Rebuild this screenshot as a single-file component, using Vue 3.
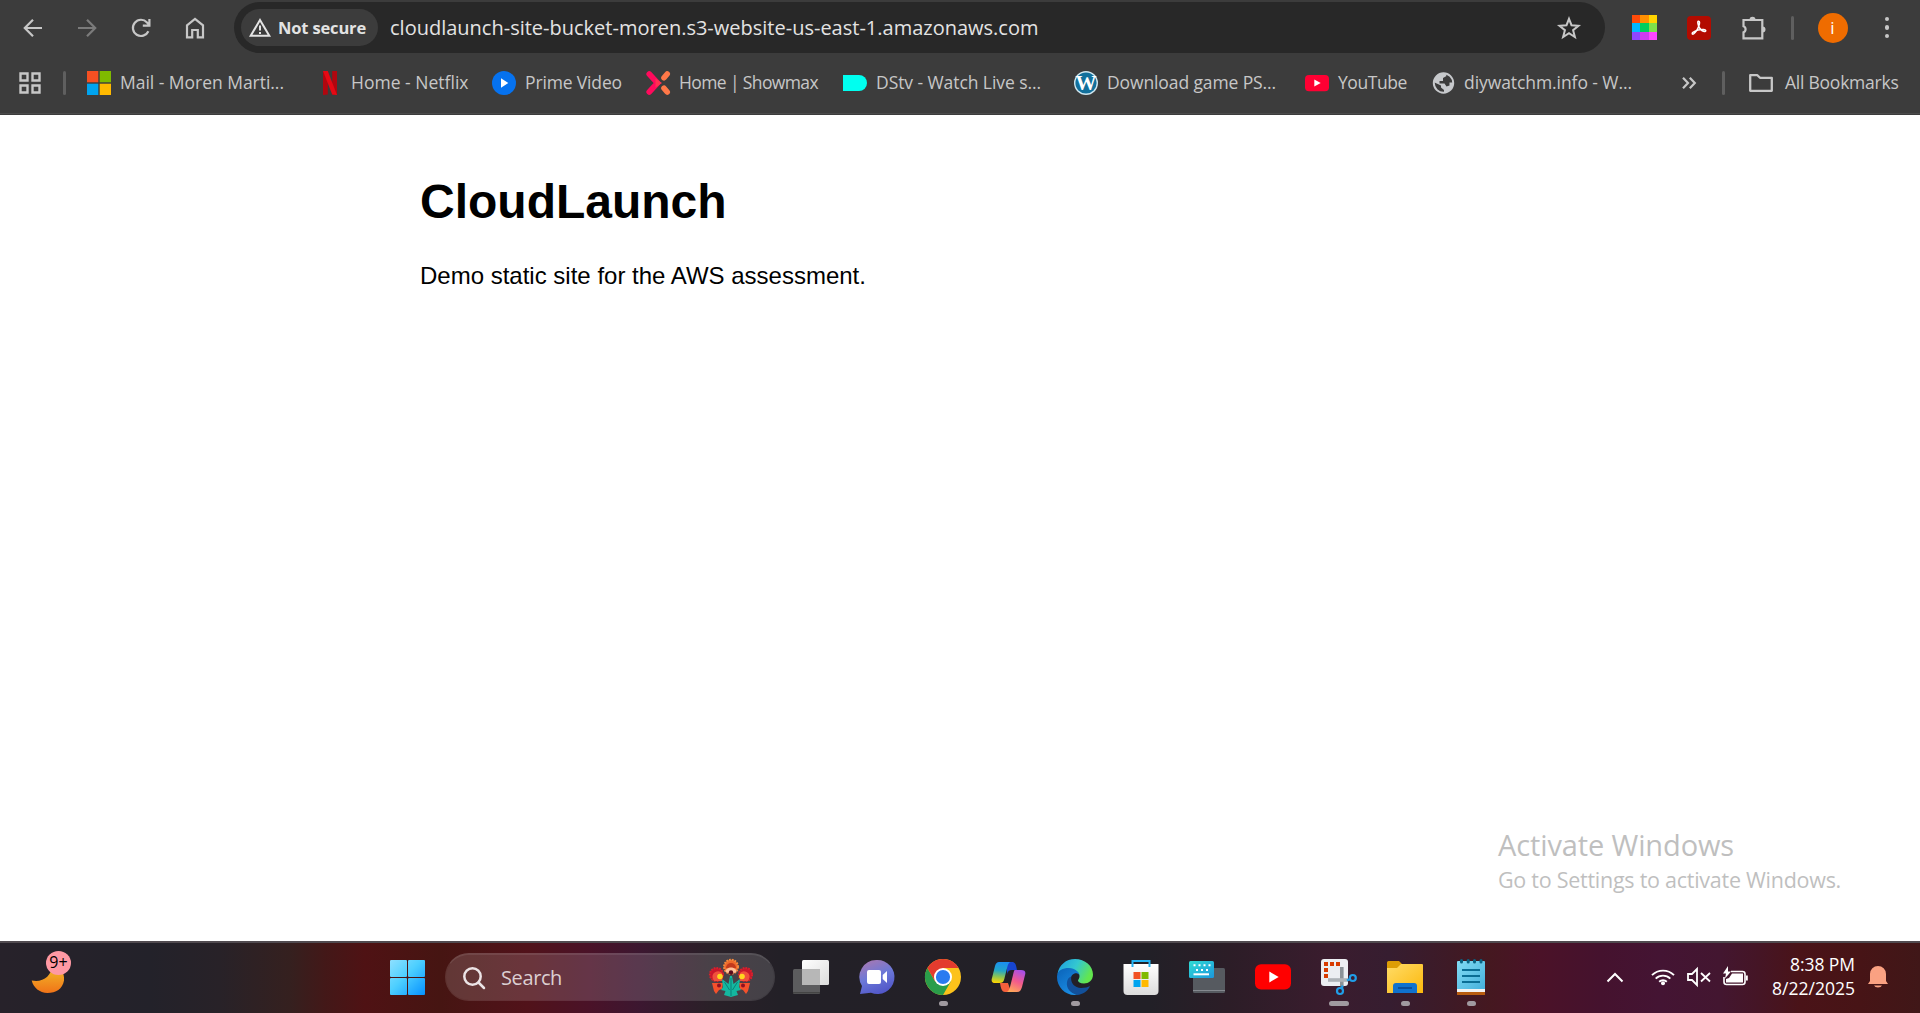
<script setup>
const bookmarks = [
  { id: 'mail', label: 'Mail - Moren Marti...', slot: 231, width: 164 },
  { id: 'netflix', label: 'Home - Netflix', slot: 174, width: 117.5 },
  { id: 'prime', label: 'Prime Video', slot: 154, width: 97 },
  { id: 'showmax', label: 'Home | Showmax', slot: 197, width: 139 },
  { id: 'dstv', label: 'DStv - Watch Live s...', slot: 231, width: 165 },
  { id: 'wordpress', label: 'Download game PS...', slot: 231, width: 169 },
  { id: 'youtube', label: 'YouTube', slot: 126, width: 69 },
  { id: 'globe', label: 'diywatchm.info - W...', slot: 248, width: 168 },
]

const apps = [
  { id: 'taskview' },
  { id: 'chat' },
  { id: 'chrome', run: 9 },
  { id: 'copilot' },
  { id: 'edge', run: 9 },
  { id: 'store' },
  { id: 'keyboard' },
  { id: 'youtube' },
  { id: 'snip', run: 20 },
  { id: 'explorer', run: 9 },
  { id: 'notepad', run: 9 },
]

const swatches = ['#ff4b0a', '#ff8f00', '#ffd400', '#00b8ff', '#00cf5d', '#7ee04a', '#8f45ff', '#cf3df0', '#ff45ff']

// Adjusts tracking so that a label takes up the given width in pixels.
const vFit = {
  mounted(el, { value }) {
    const natural = el.getBoundingClientRect().width
    const count = el.textContent.length
    el.style.letterSpacing = ((value - natural) / count).toFixed(3) + 'px'
  },
}
</script>

<template>
  <div class="screen">
    <header class="browser">
      <div class="toolbar">
        <nav class="nav">
          <svg class="nav-icon" viewBox="0 0 24 24"><path d="M21 12H4M12 3.8 3.8 12l8.2 8.2" /></svg>
          <svg class="nav-icon dim" viewBox="0 0 24 24"><path d="M3 12h17M12 3.8l8.2 8.2-8.2 8.2" /></svg>
          <svg class="nav-icon" viewBox="0 0 24 24"><path d="M19.4 15.2A8.1 8.1 0 1 1 18 6.4l2 2.2M20.4 3v6.6h-6.6" /></svg>
          <svg class="nav-icon" viewBox="0 0 24 24"><path d="M4 9.3 12 3l8 6.3V21.300h-5.200v-7.300H9.200v7.300H4z" /></svg>
        </nav>
        <div class="omnibox">
          <div class="chip">
            <svg class="warn" viewBox="0 0 22 19"><path d="M11 2 20.300 17.800H1.700z" /><path d="M11 7.500v5M11 14v2" /></svg>
            <b v-fit="88">Not secure</b>
          </div>
          <span v-fit="648.5" class="url">cloudlaunch-site-bucket-moren.s3-website-us-east-1.amazonaws.com</span>
          <svg class="star" viewBox="0 0 24 24"><path d="M12 2.800l2.500 6.400 7 .5-5.400 4.500 1.800 6.800-5.900-3.800-5.900 3.800 1.800-6.800-5.400-4.500 7-.5z" /></svg>
        </div>
        <div class="swatches"><i v-for="c in swatches" :key="c" :style="{ background: c }"></i></div>
        <svg class="acrobat" viewBox="0 0 24 24">
          <rect width="24" height="24" rx="4" fill="#b30b00" />
          <path d="M11.300 5.300c1.600-.4 1.500 2 .5 4.800-1.200 3.400-3.300 6.600-5.200 7.800-1.700 1-2-1 0-2 3-1.700 7.300-2.600 10.300-2.300 2.800.3 2.200 2.300.3 1.900-2.800-.6-5-3.400-5.900-6.500-.5-1.600-.7-3.400 0-3.700z" fill="none" stroke="#fff" stroke-width="1.500" />
        </svg>
        <svg class="puzzle" viewBox="0 0 26 26"><path d="M2.500 5h18.800v18.400H2.500v-6.200a3.200 3.200 0 0 0 0-6z" /><path class="fill" d="M8.500 4.800a3 3 0 0 1 6 0zM21.500 11.500a3 3 0 0 1 0 6z" /></svg>
        <i class="rule"></i>
        <div class="avatar">i</div>
        <div class="dots"><i></i><i></i><i></i></div>
      </div>

      <div class="bookmarks">
        <svg class="grid-icon" viewBox="0 0 22 22"><path d="M1.500 1.500h7v7h-7zM13.500 1.500h7v7h-7zM1.500 13.500h7v7h-7zM13.500 13.500h7v7h-7z" /></svg>
        <i class="rule"></i>
        <div class="links">
          <a v-for="b in bookmarks" :key="b.id" class="link" :style="{ width: b.slot + 'px' }">
            <svg class="fav" viewBox="0 0 24 24">
              <template v-if="b.id === 'mail'">
                <path fill="#f65022" d="M0 0h11.300v11.300H0z" /><path fill="#7fba00" d="M12.700 0H24v11.300H12.700z" />
                <path fill="#00a4ef" d="M0 12.700h11.300V24H0z" /><path fill="#ffb900" d="M12.700 12.700H24V24H12.700z" />
              </template>
              <template v-else-if="b.id === 'netflix'">
                <path fill="#b1060f" d="M5 0h4.800v23.500L5 24zM14.200 0H19v24l-4.800-.5z" />
                <path fill="#e50914" d="M5 0h4.800L19 24l-4.800-.5z" />
              </template>
              <template v-else-if="b.id === 'prime'">
                <circle cx="12" cy="12" r="12" fill="#0672ef" /><path fill="#fff" d="M9 7.300v9.400l7.300-4.700z" />
              </template>
              <template v-else-if="b.id === 'showmax'">
                <g fill="none" stroke-width="5.600" stroke-linecap="round" stroke-linejoin="round"><path stroke="#ff7848" d="M21.200 3 18 6.800M18 17.200l3.200 3.800" /><path stroke="#ff0a5c" d="M3.200 3 11.500 12 3.200 21" /></g>
                <path fill="#ff3050" d="M9.500 7.500l6.500 4.500-6.500 4.500z" />
              </template>
              <path v-else-if="b.id === 'dstv'" fill="#00fff0" d="M0 4h16a8 8 0 0 1 0 16H0z" />
              <template v-else-if="b.id === 'wordpress'">
                <circle cx="12" cy="12" r="12" fill="#cfe6ef" /><circle cx="12" cy="12" r="10.600" fill="#12709c" />
                <text x="12" y="19" text-anchor="middle" textLength="21" lengthAdjust="spacingAndGlyphs" class="wp">W</text>
              </template>
              <template v-else-if="b.id === 'youtube'">
                <rect y="4" width="24" height="16.300" rx="4" fill="#ff0033" /><path fill="#fff" d="M9.300 8.500v7L15.700 12z" />
              </template>
              <template v-else>
                <circle cx="12.500" cy="12" r="9.700" fill="none" stroke="#c7c9cc" stroke-width="2" />
                <path fill="#c7c9cc" d="M2.500 11C4 5 9 1.500 14.500 2.500l1 2.500-3.500 2v3H8.500v2.500h5l2 3 3-1v-3h4c0 6-5 10-9.500 10v-2.500l-3-2.500v-2z" />
              </template>
            </svg>
            <span v-fit="b.width">{{ b.label }}</span>
          </a>
        </div>
        <svg class="more" viewBox="0 0 14 12"><path d="M1 .8 6 6l-5 5.200M7.800.8l5 5.200-5 5.200" /></svg>
        <i class="rule second"></i>
        <svg class="folder" viewBox="0 0 24 18"><path d="M1.200 15.800V1.200h7.200l2.600 2.600h11.800v13H1.200z" /></svg>
        <span v-fit="113.5" class="all">All Bookmarks</span>
      </div>
    </header>

    <main class="page">
      <article>
        <h1>CloudLaunch</h1>
        <p>Demo static site for the AWS assessment.</p>
      </article>
      <aside class="watermark">
        <div><span v-fit="236" class="wm-title">Activate Windows</span></div>
        <div><span v-fit="343" class="wm-text">Go to Settings to activate Windows.</span></div>
      </aside>
    </main>

    <footer class="taskbar">
      <div class="weather">
        <svg class="moon" viewBox="0 0 34 32">
          <defs><linearGradient id="mn" x1="0" y1="0" x2="0" y2="1"><stop stop-color="#f2c32c" /><stop offset="1" stop-color="#f07318" /></linearGradient></defs>
          <path fill="url(#mn)" d="M.7 19.500C12 21.500 20 16 22 3c7 3 12 9 11 16.500C31.500 28 25 32 16.500 32 8.500 31.500 2.500 27 .7 19.500z" />
        </svg>
        <span class="badge">9+</span>
      </div>
      <svg class="start" viewBox="0 0 35 35">
        <defs><linearGradient id="st" gradientUnits="userSpaceOnUse" x1="0" y1="0" x2="35" y2="35"><stop stop-color="#8ee0ff" /><stop offset=".45" stop-color="#4dcfff" /><stop offset="1" stop-color="#0691ff" /></linearGradient></defs>
        <g fill="url(#st)"><rect width="17" height="17" rx="1" /><rect x="18" width="17" height="17" rx="1" /><rect y="18" width="17" height="17" rx="1" /><rect x="18" y="18" width="17" height="17" rx="1" /></g>
      </svg>
      <div class="search">
        <svg class="lens" viewBox="0 0 22 22"><circle cx="9.500" cy="9.500" r="8.200" /><path d="M15.500 15.500 21 21" /></svg>
        <span v-fit="61">Search</span>
        <svg class="flower" viewBox="0 0 44 38">
          <path fill="#f4512c" d="M3 24h11l-1 6-3 1-3 4-2-3zM41 24H30l1 6 3 1 3 4 2-3z" />
          <circle cx="7.500" cy="15.500" r="6.600" fill="#c9162b" /><circle cx="7.500" cy="15.500" r="6.600" fill="none" stroke="#d8202c" stroke-width="2" stroke-dasharray="1.800 1" />
          <circle cx="36.500" cy="15.500" r="6.600" fill="#c9162b" /><circle cx="36.500" cy="15.500" r="6.600" fill="none" stroke="#d8202c" stroke-width="2" stroke-dasharray="1.800 1" />
          <path fill="#f0503c" d="M4 20a5.500 5.500 0 0 1 9-6v8H5zM40 20a5.500 5.500 0 0 0-9-6v8h8z" />
          <circle cx="22" cy="7.800" r="7" fill="#ee6a2c" /><circle cx="22" cy="7.800" r="7" fill="none" stroke="#f58a3c" stroke-width="2" stroke-dasharray="1.800 1" />
          <path fill="#c23a1c" d="M17 9a5 5 0 0 1 10 0z" /><path fill="#ffc19a" d="M16.500 13c0-6 11-6 11 0l-5.500 2z" />
          <circle cx="22" cy="13.500" r="2.200" fill="#5a0c1c" />
          <path fill="#14b8a0" d="M22 38l-7-2 1.500-4-4.500-1 2-3-1-8 6.500 5L21 17h2l1.500 8 6.500-5-1 8 2 3-4.500 1L29 36z" />
          <path stroke="#0b7f78" d="M22 19v18M15.500 23l5 8M28.500 23l-5 8" fill="none" />
          <circle cx="11" cy="17.500" r="2.800" fill="#ffd51f" /><circle cx="33" cy="17.500" r="2.800" fill="#ffd51f" />
          <circle cx="10" cy="26.500" r="2" fill="#8f1022" /><circle cx="34" cy="26.500" r="2" fill="#8f1022" />
        </svg>
      </div>

      <div class="apps">
        <div v-for="a in apps" :key="a.id" class="app">
          <svg class="app-icon" viewBox="0 0 36 36">
            <template v-if="a.id === 'taskview'">
              <defs><linearGradient id="tv" x1="0" y1="0" x2="1" y2="1"><stop stop-color="#fff" /><stop offset="1" stop-color="#dcdcdc" /></linearGradient></defs>
              <rect y="10" width="27" height="25" rx="1.500" fill="#5c5c5e" /><rect y="33" width="27" height="1.500" fill="#444" />
              <rect x="9" y="1" width="27" height="25" rx="1.500" fill="url(#tv)" /><path fill="#b7b7b7" d="M9 10h18v16H9z" />
            </template>
            <template v-else-if="a.id === 'chat'">
              <defs><linearGradient id="ch" x1=".2" y1="0" x2=".6" y2="1"><stop stop-color="#a778b2" /><stop offset=".5" stop-color="#6b78d8" /><stop offset="1" stop-color="#5156c8" /></linearGradient></defs>
              <path fill="url(#ch)" d="M18 1a17 17 0 1 1-6 32.700L1 35l2-8A17 17 0 0 1 18 1z" />
              <rect x="8" y="11" width="14" height="14" rx="2" fill="#fff" /><path fill="#fff" d="M23.700 16 28 12v12l-4.300-4z" />
            </template>
            <template v-else-if="a.id === 'chrome'">
              <circle cx="18" cy="18" r="18" fill="#fcc21b" />
              <path fill="#e33b2e" d="M2.400 9A18 18 0 0 1 33.600 9H18v9z" />
              <path fill="#2a9d4a" d="M2.400 9A18 18 0 0 0 18 36l7.800-13.500L10.200 22.500z" />
              <path fill="#e33b2e" d="M2.400 9 10.200 22.500 18 9z" />
              <circle cx="18" cy="18" r="9" fill="#fff" /><circle cx="18" cy="18" r="7.100" fill="#2a7bf0" />
            </template>
            <template v-else-if="a.id === 'copilot'">
              <defs>
                <linearGradient id="cpa" x1=".4" y1="0" x2=".3" y2="1"><stop stop-color="#1b8ff0" /><stop offset=".4" stop-color="#22a6c8" /><stop offset=".7" stop-color="#8cc453" /><stop offset="1" stop-color="#ffd500" /></linearGradient>
                <linearGradient id="cpb" x1=".7" y1="0" x2=".3" y2="1"><stop stop-color="#a84fe8" /><stop offset=".5" stop-color="#f35a8c" /><stop offset="1" stop-color="#ffa858" /></linearGradient>
              </defs>
              <path fill="#1745cf" d="M16 3h5c3 0 4 2 5 8h-5c-3 0-4 1-5 4z" />
              <path fill="#f4603c" d="M9 24h8l3 9h-6c-3 0-4-3-5-9z" />
              <path fill="url(#cpa)" d="M8 3h12c-2 0-3 2-3.700 5l-3 12c-.8 3-2 4-5 4H4c-3 0-4-2-3-5L4 7c1-3 2-4 4-4z" />
              <path fill="url(#cpb)" d="M24 11h6c4 0 5 2 4 5l-3 12c-1 3-2 5-5 5H15c2 0 3-2 4-5l3-12c.7-3 1-5 2-5z" />
            </template>
            <template v-else-if="a.id === 'edge'">
              <defs>
                <linearGradient id="eg" x1="0" x2="1" y2=".4"><stop stop-color="#1c9be0" /><stop offset=".55" stop-color="#34c8d0" /><stop offset="1" stop-color="#62e64f" /></linearGradient>
                <linearGradient id="eb" x1="0" y1="0" x2=".7" y2="1"><stop stop-color="#0a62b8" /><stop offset="1" stop-color="#1b90e6" /></linearGradient>
              </defs>
              <path fill="url(#eg)" d="M.5 15C2 6 9 0 18 0c10 0 18 7 18 15.500 0 6-4.500 9-9 9-4 0-6-1.500-6-3 0-1 1.500-1.500 1.500-4.500 0-3-3-6-8-6-7 0-12 2-14 4z" />
              <path fill="url(#eb)" d="M0 18C0 11 6 9 12 9c6 0 10 4 10.500 7-3-4-9-1-9 5 0 7 5 11 10 12.500-2 1.500-4 2.500-6 2.500C8 36 0 28 0 18z" />
              <path fill="#12509a" d="M14.300 17.500C13 24 18 29 24 29c4 0 7-1 9-2-2 5-7 8.500-13 9-7-2-11-7-10-13 .5-3 2-5 4.300-5.500z" />
            </template>
            <template v-else-if="a.id === 'store'">
              <defs><linearGradient id="so" x2="0" y2="1"><stop stop-color="#fff" /><stop offset="1" stop-color="#dcdcdc" /></linearGradient></defs>
              <path fill="url(#so)" d="M.500 5h35v27a4 4 0 0 1-4 4h-27a4 4 0 0 1-4-4z" />
              <path fill="none" stroke="#24b4f4" stroke-width="2" d="M9.500 8V2h17v6" />
              <path fill="#f25022" d="M10.500 13h7v7h-7z" /><path fill="#7fba00" d="M18.500 13h7v7h-7z" /><path fill="#00a4ef" d="M10.500 21h7v7h-7z" /><path fill="#ffb900" d="M18.500 21h7v7h-7z" />
            </template>
            <template v-else-if="a.id === 'keyboard'">
              <defs><linearGradient id="kb" x2="1" y2="1"><stop stop-color="#30dcd4" /><stop offset="1" stop-color="#1b96dc" /></linearGradient></defs>
              <rect x="4" y="9" width="32" height="25" rx="1.500" fill="#565a60" /><path fill="#858a90" d="M4 31h32v1H4z" />
              <rect y="2" width="25" height="17" rx="1.500" fill="url(#kb)" />
              <path stroke="#fff" stroke-width="2" stroke-dasharray="2 3" d="M4.500 6.300h17M7 11h14" /><path stroke="#fff" stroke-width="2" d="M4.500 15.300h15.500" />
            </template>
            <template v-else-if="a.id === 'youtube'">
              <rect y="5.300" width="36" height="25.200" rx="6" fill="#f00" /><path fill="#fff" d="M14.300 12.500v11L23.700 18z" />
            </template>
            <template v-else-if="a.id === 'snip'">
              <rect width="27" height="27" rx="3" fill="#eceef2" />
              <path fill="#d83b01" d="M3 3h4v4H3zM9 3h4v4H9zM15 3h4v4h-4zM3 9h4v4H3zM3 15h4v4H3z" />
              <path fill="none" stroke="#8b9298" stroke-width="3.600" d="M20.800 8v19.500" /><path fill="none" stroke="#adb2b7" stroke-width="3.600" d="M7 21h20" />
              <g fill="none" stroke="#209ee8" stroke-width="2.200"><circle cx="31.800" cy="19" r="3" /><circle cx="19" cy="32" r="3" /><path d="M26 21.500l3-1.500M21 29.500l.5-3" /></g>
            </template>
            <template v-else-if="a.id === 'explorer'">
              <defs><linearGradient id="ex" x2="1" y2="1"><stop stop-color="#ffdc68" /><stop offset="1" stop-color="#fcb80c" /></linearGradient></defs>
              <path fill="#dd9d05" d="M0 3.500A1.500 1.500 0 0 1 1.500 2H12l3 3h20v8H0z" />
              <path fill="url(#ex)" d="M0 9h10l4-4h21a1 1 0 0 1 1 1v28H0z" />
              <path fill="#1072ce" d="M6 34v-7a3 3 0 0 1 3-3h18a3 3 0 0 1 3 3v7z" /><path stroke="#0a4f9c" stroke-width="2" d="M11 29h14" />
            </template>
            <template v-else>
              <defs><linearGradient id="np" x2="1" y2="1"><stop stop-color="#82dcf4" /><stop offset="1" stop-color="#45b0dc" /></linearGradient></defs>
              <path fill="#b85d10" d="M4 31h28v5H4z" /><path fill="#f3f3f3" d="M4 29h28v4H4z" /><path fill="url(#np)" d="M4 3a1 1 0 0 1 1-1h26a1 1 0 0 1 1 1v27H4z" />
              <path fill="none" stroke="#0a6484" stroke-width="3" stroke-linecap="round" d="M8.500 1.500v1.500M15.200 1.500v1.500M21.500 1.500v1.500M28 1.500v1.500" />
              <path stroke="#0a6d94" stroke-width="1.800" d="M9 11h18M9 17h18M9 23h18" />
            </template>
          </svg>
          <i v-if="a.run" class="run" :style="{ width: a.run + 'px' }"></i>
        </div>
      </div>

      <div class="tray">
        <svg class="caret" viewBox="0 0 18 11"><path d="M1.500 9.500 9 2l7.500 7.500" /></svg>
        <svg class="wifi" viewBox="0 0 24 18"><path d="M1 7.200a15.500 15.500 0 0 1 22 0M4.700 10.700a10.300 10.300 0 0 1 14.600 0M8.200 13.700a5.500 5.500 0 0 1 7.600 0" /><circle cx="12" cy="15.300" r="2" /></svg>
        <svg class="mute" viewBox="0 0 24 18"><path d="M1 6h4l5-5v16l-5-5H1zM14 5l9 8.500M23 5l-9 8.500" /></svg>
        <svg class="battery" viewBox="0 0 25 20"><path fill="none" stroke="#fff" stroke-width="1.600" d="M8 5.500h11.500a2.500 2.500 0 0 1 2.500 2.500v8a2.500 2.500 0 0 1-2.500 2.500H3.500A2.500 2.500 0 0 1 1 16v-5" /><path fill="#fff" d="M9 7.500h11v9H3v-3.500l3-1zM23 9.500h1.800v5H23zM5 0 0 7.500h3L2 12.500 8 5.500H5z" /></svg>
        <div class="clock"><span v-fit="65">8:38 PM</span><span v-fit="83">8/22/2025</span></div>
        <svg class="bell" viewBox="0 0 20 24"><path d="M2 16V9a8 8 0 0 1 16 0v7l2 3H0z" /><path d="M6 20.500h8a4.200 3 0 0 1-8 0z" /></svg>
      </div>
    </footer>
  </div>
</template>

<style scoped>
.screen {
  display: flex;
  flex-direction: column;
  width: 1920px;
  height: 1013px;
  overflow: hidden;
  background: #fff;
  font-family: "Open Sans", "Noto Sans", sans-serif;
}
svg { display: block; flex: none; overflow: visible; }
span, b { white-space: nowrap; flex: none; }

.browser {
  box-sizing: border-box;
  height: 115px;
  flex: none;
  background: linear-gradient(#3c3c3c 113px, #4a4a4a 113px, #4a4a4a 114px, #3c3c3c 114px);
}
.toolbar { display: flex; align-items: center; height: 51px; padding: 2px 0 2px 21px; }
.nav { display: flex; gap: 30px; width: 213px; }
.nav-icon { width: 24px; height: 24px; fill: none; stroke: #c7c7c7; stroke-width: 2.200; }
.nav-icon.dim { stroke: #7b7b7b; }
.omnibox {
  box-sizing: border-box;
  display: flex;
  align-items: center;
  flex: none;
  width: 1371px;
  height: 51px;
  padding: 0 24px 0 7px;
  border-radius: 26px;
  background: #282828;
}
.chip {
  box-sizing: border-box;
  display: flex;
  align-items: center;
  gap: 7px;
  width: 137px;
  height: 37px;
  padding-left: 8px;
  border-radius: 19px;
  background: #3c3c3c;
  color: #e3e3e3;
  font-size: 16.500px;
}
.warn { width: 22px; height: 19px; fill: none; stroke: #e3e3e3; stroke-width: 2; }
.url { margin-left: 12px; color: #e3e3e3; font-size: 20px; }
.star { width: 24px; height: 24px; margin-left: auto; fill: none; stroke: #c7c7c7; stroke-width: 2; }
.swatches { display: grid; grid-template-columns: repeat(3, 1fr); width: 25px; height: 25px; flex: none; margin-left: 27px; }
.acrobat { width: 24px; height: 24px; margin-left: 29.500px; }
.puzzle { width: 26px; height: 26px; margin-left: 30px; fill: none; stroke: #c7c7c7; stroke-width: 2.200; }
.puzzle .fill { fill: #c7c7c7; stroke: none; }
.rule { flex: none; width: 3px; height: 24px; border-radius: 2px; background: #5f5f5f; }
.toolbar .rule { margin-left: 24px; }
.avatar {
  flex: none;
  width: 30px;
  height: 30px;
  margin-left: 24px;
  border-radius: 50%;
  background: #ef6c00;
  color: #fff;
  font-size: 17px;
  line-height: 29px;
  text-align: center;
}
.dots { display: flex; flex-direction: column; gap: 4px; margin-left: 37px; }
.dots i { width: 4.500px; height: 4.500px; border-radius: 50%; background: #c7c7c7; }

.bookmarks { display: flex; align-items: center; height: 56px; padding-left: 19px; color: #c7c7c7; font-size: 17.500px; }
.grid-icon { width: 22px; height: 22px; margin-right: 22px; fill: none; stroke: #c7c7c7; stroke-width: 2.400; }
.links { display: flex; flex: none; width: 1592px; margin-left: 21px; }
.link { display: flex; align-items: center; gap: 9px; flex: none; }
.link span, .all { padding-bottom: 2px; }
.fav { width: 24px; height: 24px; }
.wp { font: bold 20px "Liberation Serif", serif; fill: #fff; }
.more { width: 14px; height: 12px; margin-left: 3px; fill: none; stroke: #c7c7c7; stroke-width: 2.200; }
.second { margin-left: 26px; }
.folder { width: 24px; height: 18px; margin-left: 24px; fill: none; stroke: #c7c7c7; stroke-width: 2.300; stroke-linejoin: round; }
.all { margin-left: 12px; }

.page { display: flex; flex-direction: column; justify-content: space-between; height: 826px; box-sizing: border-box; padding: 59px 0 45px; }
article { width: 1080px; margin: 0 auto; font-family: "Liberation Sans", Arial, sans-serif; color: #000; }
h1 { margin: 0 0 33px; font-size: 48px; line-height: 55px; }
p { margin: 0; font-size: 24px; line-height: 27px; }
.watermark { margin-left: 1498px; color: #bfbfbf; }
.watermark div { display: flex; }
.wm-title { font-size: 29px; line-height: 36px; padding-bottom: 1px; }
.wm-text { font-size: 21.500px; line-height: 32px; }

.taskbar {
  box-sizing: border-box;
  display: flex;
  align-items: center;
  height: 72px;
  flex: none;
  padding-bottom: 2px;
  border-top: 2px solid #514b50;
  background: linear-gradient(90deg, #27222a 0, #23222a 150px, #282228 220px, #35201f 290px, #431818 325px, #4f1214 365px, #461512 440px, #51121a 527px, #4a1228 590px, #3c1730 640px, #2a2028 710px, #232027 780px, #222027 1150px, #2c1d27 1230px, #3a1c2e 1330px, #361d30 1390px, #3e1a26 1450px, #451820 1490px, #4b1228 1540px, #45122e 1600px, #441433 1660px, #431630 1720px, #451525 1760px, #4a1318 1800px, #471416 1860px, #401718 1920px);
  background-origin: border-box;
}
.weather { position: relative; width: 390px; height: 68px; flex: none; }
.moon { width: 34px; height: 32px; margin: 18px 0 0 31px; }
.badge {
  position: absolute;
  left: 46px;
  top: 8px;
  width: 25px;
  height: 24px;
  border-radius: 50%;
  background: #ff99a4;
  color: #000;
  font: 16px/23px "Open Sans", sans-serif;
  text-align: center;
}
.start { width: 35px; height: 35px; }
.search {
  box-sizing: border-box;
  display: flex;
  align-items: center;
  flex: none;
  width: 330px;
  height: 48px;
  margin-left: 20px;
  padding: 0 21px 0 17px;
  border: 1px solid rgba(255, 255, 255, .13);
  border-top: 2px solid rgba(255, 255, 255, .22);
  border-radius: 24px;
  background: rgba(255, 255, 255, .15);
  background-clip: padding-box;
  color: #dccfd2;
  font-size: 20px;
}
.lens { width: 22px; height: 22px; margin-right: 16px; fill: none; stroke: #ece4e6; stroke-width: 2.500; stroke-linecap: round; }
.flower { width: 44px; height: 38px; margin-left: auto; }
.apps { display: flex; margin-left: 3px; flex: none; }
.app { position: relative; display: flex; align-items: center; justify-content: center; width: 66px; height: 68px; }
.app-icon { width: 36px; height: 36px; }
.run { position: absolute; bottom: 5px; height: 5px; border-radius: 3px; background: #a09aa0; }
.tray { display: flex; align-items: center; margin-left: 102px; }
.caret, .wifi, .mute { fill: none; stroke: #fff; stroke-width: 2; }
.caret { width: 18px; height: 11px; }
.wifi { width: 24px; height: 18px; margin-left: 27px; stroke-width: 1.900; }
.wifi circle { fill: #fff; stroke: none; }
.mute { width: 24px; height: 18px; margin-left: 12px; stroke-width: 1.800; }
.battery { width: 25px; height: 20px; margin-left: 12px; margin-bottom: 3px; }
.clock { display: flex; flex-direction: column; align-items: flex-end; width: 107px; padding-bottom: 2px; color: #fff; font-size: 17.500px; line-height: 24px; }
.bell { width: 20px; height: 24px; margin-left: 13px; fill: #faa182; }
</style>

<style>
html, body { margin: 0; overflow: hidden; background: #fff; }
</style>
